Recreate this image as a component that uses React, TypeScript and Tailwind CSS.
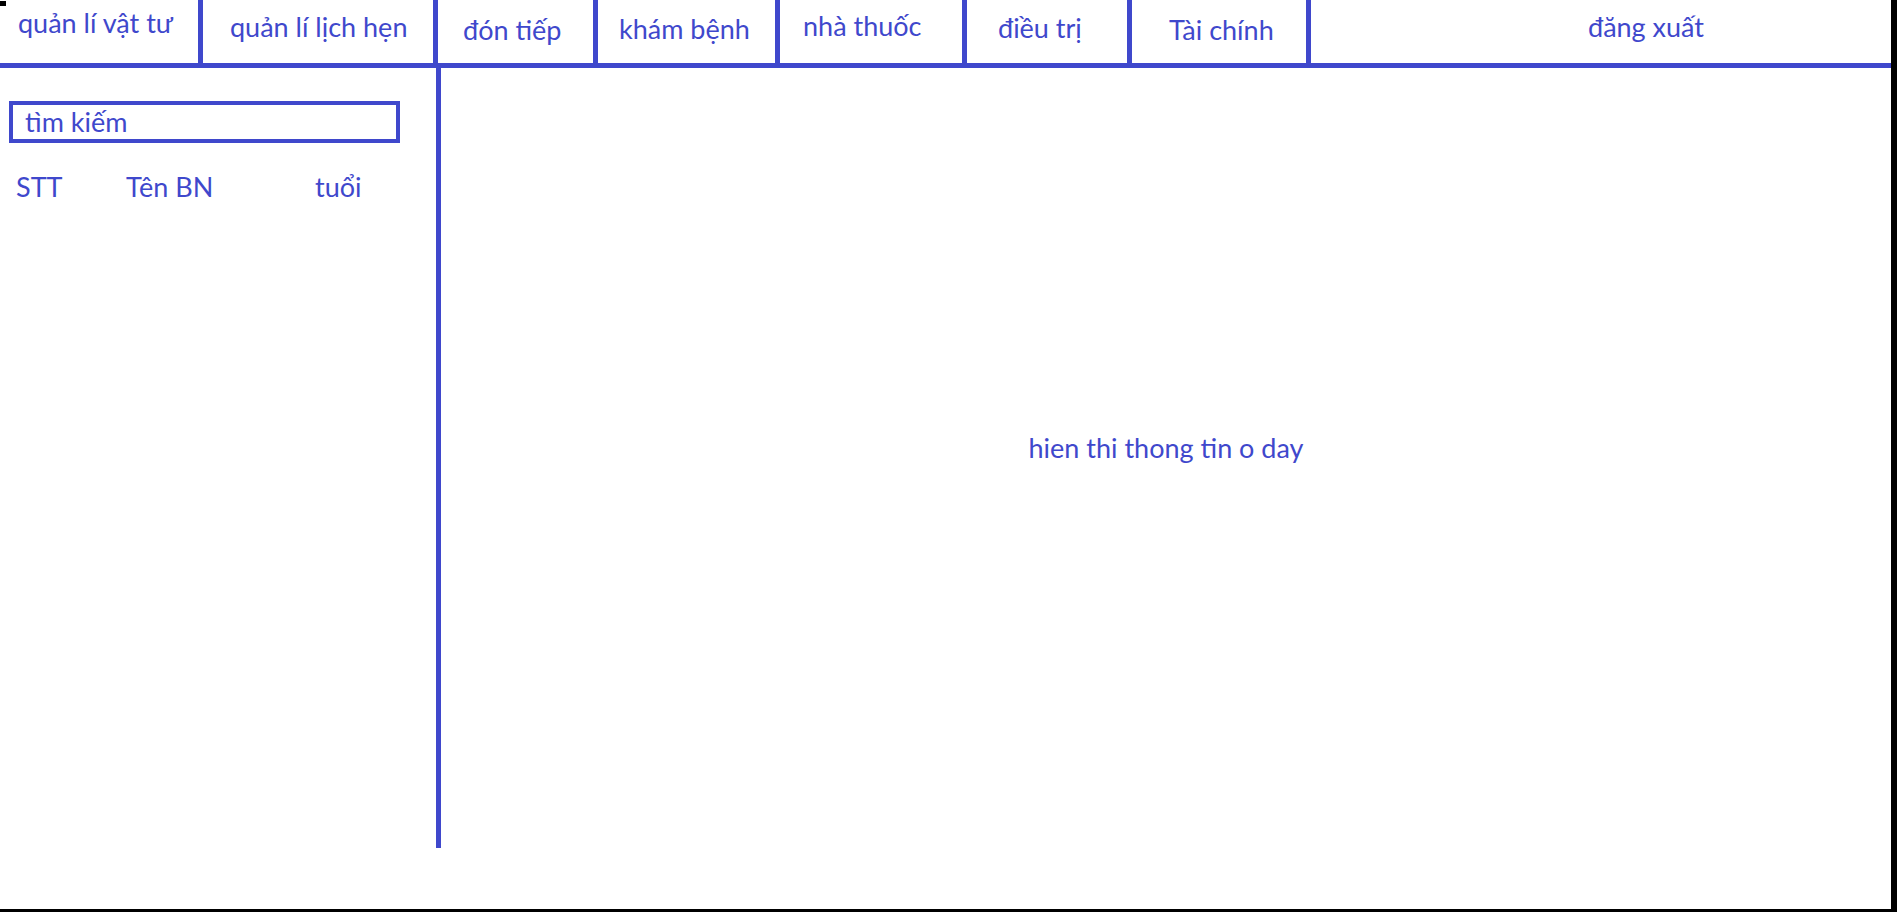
const BLUE = 'border-[#3f48cc]';

const tabs = [
  { label: 'quản lí vật tư', w: 'w-[203px]', cls: 'pl-[18px] pt-[7px]' },
  { label: 'quản lí lịch hẹn', w: 'w-[235px]', cls: 'pl-[27px] pt-[11px]' },
  { label: 'đón tiếp', w: 'w-[160px]', cls: 'pl-[25px] pt-[14px]' },
  { label: 'khám bệnh', w: 'w-[182px]', cls: 'pl-[21px] pt-[13px]' },
  { label: 'nhà thuốc', w: 'w-[187px]', cls: 'pl-[23px] pt-[10px]' },
  { label: 'điều trị', w: 'w-[165px]', cls: 'pl-[31px] pt-[12px]' },
  { label: 'Tài chính', w: 'w-[179px]', cls: 'pl-[37px] pt-[14px]' },
];

export default function App() {
  return (
    <div
      className="relative h-[912px] w-full bg-white border-r-[6px] border-b-[3px] border-black text-[#3f48cc] text-[27px] leading-[32px]"
      style={{ fontFamily: 'Lato, "Open Sans", sans-serif' }}
    >
      <div className="absolute left-0 top-[1px] h-[5px] w-[6px] bg-black" />

      {/* top menu */}
      <div className={`flex h-[68px] border-b-[5px] ${BLUE}`}>
        {tabs.map((t) => (
          <div key={t.label} className={`${t.w} shrink-0 whitespace-nowrap border-r-[5px] ${BLUE} ${t.cls}`}>
            {t.label}
          </div>
        ))}
        <div className="flex-1 whitespace-nowrap pl-[277px] pt-[11px]">đăng xuất</div>
      </div>

      <div className="flex">
        {/* patient list */}
        <div className={`w-[441px] h-[780px] shrink-0 border-r-[5px] ${BLUE}`}>
          <div className={`ml-[9px] mt-[33px] h-[42px] w-[391px] border-4 ${BLUE} pl-[12px] pt-[1px]`}>
            tìm kiếm
          </div>
          <div className="mt-[28px] flex">
            <span className="pl-[16px] w-[126px]">STT</span>
            <span className="w-[189px]">Tên BN</span>
            <span>tuổi</span>
          </div>
        </div>

        {/* detail area */}
        <div className="flex h-[780px] flex-1 items-center justify-center pb-[20px]">
          hien thi thong tin o day
        </div>
      </div>
    </div>
  );
}
